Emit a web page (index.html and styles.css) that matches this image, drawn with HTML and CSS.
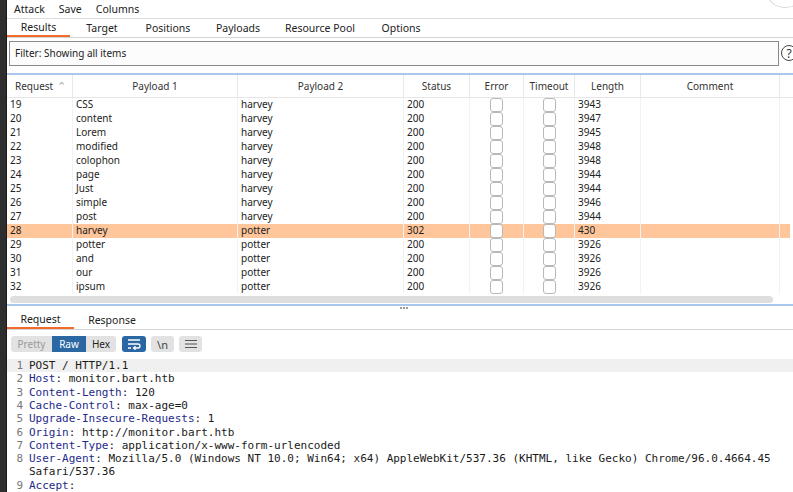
FILE: index.html
```html
<!DOCTYPE html>
<html>
<head>
<meta charset="utf-8">
<link rel="stylesheet" href="styles.css">
</head>
<body>
<div class="strip"></div>
<div class="main">
  <div class="corner-circle"></div>
  <div class="menubar">
    <span class="m1">Attack</span><span class="m2">Save</span><span>Columns</span>
  </div>
  <div class="tabs top-tabs">
    <span class="tab active t-results">Results</span>
    <span class="tab t-target">Target</span>
    <span class="tab t-positions">Positions</span>
    <span class="tab t-payloads">Payloads</span>
    <span class="tab t-pool">Resource Pool</span>
    <span class="tab t-options">Options</span>
  </div>
  <div class="filter-row">
    <div class="filter">Filter: Showing all items</div>
    <div class="help">?</div>
  </div>
  <div class="table">
    <div class="row head">
      <div class="c c1 left">Request <span class="sort">&#8963;</span></div>
      <div class="c c2">Payload 1</div>
      <div class="c c3">Payload 2</div>
      <div class="c c4">Status</div>
      <div class="c c5">Error</div>
      <div class="c c6">Timeout</div>
      <div class="c c7">Length</div>
      <div class="c c8">Comment</div>
    </div>
    <div class="body" id="tbody"></div>
    <div class="hscroll"><div class="thumb"></div></div>
  </div>
  <div class="splitter"><span class="dot"></span><span class="dot"></span><span class="dot"></span></div>
  <div class="tabs sub-tabs">
    <span class="tab active t-req">Request</span>
    <span class="tab t-resp">Response</span>
  </div>
  <div class="toolbar">
    <div class="seg">
      <span class="sb pretty">Pretty</span><span class="sb raw">Raw</span><span class="sb hex">Hex</span>
    </div>
    <span class="ib blue"><svg width="14" height="12" viewBox="0 0 14 12"><path d="M1 2h12M1 6h10a2 2 0 0 1 0 4H7M8.5 8.2 6.5 10l2 1.8M1 10h3" fill="none" stroke="#fff" stroke-width="1.3"/></svg></span>
    <span class="ib grey nl">\n</span>
    <span class="ib grey"><svg width="12" height="10" viewBox="0 0 12 10"><path d="M0 1.5h12M0 5h12M0 8.5h12" stroke="#555" stroke-width="1.2"/></svg></span>
  </div>
  <div class="code">
    <div class="ln hl"><span class="n">1</span><span>POST / HTTP/1.1</span></div>
    <div class="ln"><span class="n">2</span><span><b>Host</b>: monitor.bart.htb</span></div>
    <div class="ln"><span class="n">3</span><span><b>Content-Length</b>: 120</span></div>
    <div class="ln"><span class="n">4</span><span><b>Cache-Control</b>: max-age=0</span></div>
    <div class="ln"><span class="n">5</span><span><b>Upgrade-Insecure-Requests</b>: 1</span></div>
    <div class="ln"><span class="n">6</span><span><b>Origin</b>: http://monitor.bart.htb</span></div>
    <div class="ln"><span class="n">7</span><span><b>Content-Type</b>: application/x-www-form-urlencoded</span></div>
    <div class="ln"><span class="n">8</span><span><b>User-Agent</b>: Mozilla/5.0 (Windows NT 10.0; Win64; x64) AppleWebKit/537.36 (KHTML, like Gecko) Chrome/96.0.4664.45</span></div>
    <div class="ln"><span class="n"></span><span>Safari/537.36</span></div>
    <div class="ln"><span class="n">9</span><span><b>Accept</b>:</span></div>
  </div>
</div>
<script>
var rows = [
[19,"CSS","harvey",200,3943],[20,"content","harvey",200,3947],[21,"Lorem","harvey",200,3945],
[22,"modified","harvey",200,3948],[23,"colophon","harvey",200,3948],[24,"page","harvey",200,3944],
[25,"Just","harvey",200,3944],[26,"simple","harvey",200,3946],[27,"post","harvey",200,3944],
[28,"harvey","potter",302,430],[29,"potter","potter",200,3926],[30,"and","potter",200,3926],
[31,"our","potter",200,3926],[32,"ipsum","potter",200,3926]];
var h = "";
rows.forEach(function(r){
  h += '<div class="row' + (r[0]===28?' sel':'') + '">' +
    '<div class="c c1">'+r[0]+'</div><div class="c c2">'+r[1]+'</div><div class="c c3">'+r[2]+'</div>' +
    '<div class="c c4">'+r[3]+'</div><div class="c c5"><span class="cb"></span></div>' +
    '<div class="c c6"><span class="cb"></span></div><div class="c c7">'+r[4]+'</div><div class="c c8"></div></div>';
});
document.getElementById("tbody").innerHTML = h;
</script>
</body>
</html>
```
FILE: styles.css
```css
* { box-sizing: border-box; }
html, body { margin: 0; padding: 0; }
body {
  width: 793px; height: 492px; overflow: hidden;
  display: flex; background: #fff;
  font-family: "Noto Sans", "Open Sans", sans-serif; font-size: 10px; color: #222;
}
.strip { width: 7px; flex: none; background: #2e2e2e; border-right: 1px solid #1a1a1a; }
.main { flex: 1; position: relative; display: flex; flex-direction: column; background: #fff; }
.corner-circle {
  position: absolute; right: -6px; top: -22px; width: 36px; height: 30px;
  border-radius: 50%; border: 1px solid #d6d6d6; background: #fff;
}
.menubar { height: 19px; display: flex; align-items: center; padding-left: 7px; border-bottom: 1px solid #dcdcdc; font-size: 10.5px; }
.m1 { margin-right: 14px; }
.m2 { margin-right: 14px; }

.tabs { display: flex; align-items: stretch; border-bottom: 1px solid #d4d4d4; font-size: 10.5px; }
.top-tabs { height: 20px; }
.tab { display: flex; align-items: center; justify-content: center; }
.tab.active { border-bottom: 2px solid #f26a2c; }
.t-results { width: 63px; }
.t-target { width: 64px; }
.t-positions { width: 68px; }
.t-payloads { width: 72px; }
.t-pool { width: 92px; }
.t-options { width: 70px; }

.filter-row { display: flex; align-items: center; padding: 2px 0 0 2px; height: 28px; }
.filter {
  width: 770px; height: 25px; border: 1px solid #8a8a8a; background: #fcfcfc;
  display: flex; align-items: center; padding-left: 5px;
}
.help {
  width: 16px; height: 16px; border-radius: 50%; border: 1px solid #444; margin-left: 2px;
  display: flex; align-items: center; justify-content: center; font-size: 12px; color: #333;
}

.table { margin-top: 7px; border-top: 2px solid #a9c8ec; display: flex; flex-direction: column; }
.row { display: grid; grid-template-columns: 66px 165px 166px 66px 54px 51px 66px 139px; height: 14px; }
.row.head { height: 23px; border-bottom: 1px solid #e6e6e6; }
.head .c { display: flex; align-items: center; justify-content: center; border-right: 1px solid #e8e8e8; color: #333; }
.head .c.left { justify-content: flex-start; padding-left: 8px; }
.sort { color: #aaa; margin-left: 4px; font-size: 11px; }
.body .row .c { line-height: 13px; padding-left: 3px; border-right: 1px solid #f2f2f2; white-space: nowrap; }
.body .row { width: 783px; }
.body .row.sel { background: #ffc69b; }
.c5, .c6 { display: flex; justify-content: center; }
.body .c5, .body .c6 { padding-left: 0 !important; }
.cb { width: 13px; height: 14px; border: 1px solid #b8b8b8; border-radius: 3px; background: #fff; display: block; }
.hscroll { height: 9px; padding: 2px 24px 0 3px; }
.thumb { height: 7px; background: #dedede; border-radius: 4px; }

.splitter { margin-top: 1px; border-top: 2px solid #a9c8ec; height: 6px; display: flex; justify-content: center; align-items: flex-start; gap: 1px; padding-top: 1px; padding-left: 4px; }
.dot { width: 2px; height: 2px; background: #9a9a9a; }

.sub-tabs { height: 21px; }
.t-req { width: 67px; }
.t-resp { width: 76px; }

.toolbar { display: flex; align-items: center; height: 25px; padding-left: 4px; padding-top: 3px; }
.seg { display: flex; height: 16px; border-radius: 3px; overflow: hidden; background: #e2e2e2; }
.sb { display: flex; align-items: center; justify-content: center; }
.pretty { width: 41px; color: #999; }
.raw { width: 34px; background: #2b67a3; color: #fff; }
.hex { width: 30px; color: #222; }
.ib { height: 16px; border-radius: 3px; display: flex; align-items: center; justify-content: center; }
.ib.blue { width: 24px; background: #2b67a3; margin-left: 6px; }
.ib.grey { width: 23px; background: #e2e2e2; margin-left: 5px; }
.nl { color: #444; font-size: 11px; }

.code { margin-top: 4px; font-family: "DejaVu Sans Mono", monospace; font-size: 11px; color: #1a1a1a; }
.ln { display: flex; height: 13.3px; line-height: 13.3px; white-space: pre; }
.ln.hl { background: #f0f0f0; }
.ln .n { width: 22px; text-align: right; padding-right: 6px; color: #777; flex: none; }
.ln b { font-weight: normal; color: #1e2a8a; }
```
